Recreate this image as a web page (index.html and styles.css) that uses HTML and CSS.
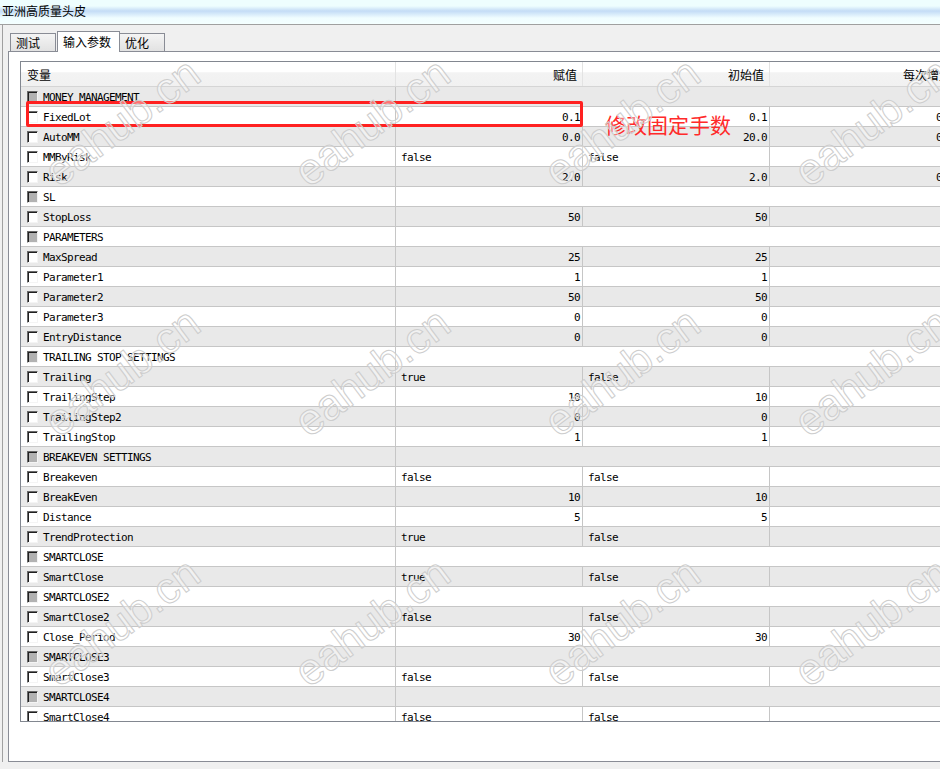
FILE: index.html
```html
<!DOCTYPE html>
<html lang="zh-CN">
<head>
    <meta charset="UTF-8">
    <meta name="viewport" content="width=device-width, initial-scale=1.0">
    <title>亚洲高质量头皮</title>
    <link rel="stylesheet" href="styles.css">
</head>
<body>

    <div class="titlebar">亚洲高质量头皮</div>

    <div class="window">
        <div class="tabs">
            <div class="tab">测试</div>
            <div class="tab active">输入参数</div>
            <div class="tab">优化</div>
        </div>

        <div class="panel">
            <!-- 参数列表 -->
            <div class="params" id="params">
                <div class="row head">
                    <div class="cell name">变量</div>
                    <div class="cell num">赋值</div>
                    <div class="cell num">初始值</div>
                    <div class="cell num">每次增量</div>
                </div>

                <div class="note-box"></div>
                <div class="note-text">修改固定手数</div>
            </div>
        </div>
    </div>

    <div class="watermarks" id="watermarks"></div>

    <script>
        // 参数: [名称, 赋值, 初始值, 每次增量]，只有名称的是分组
        const params = [
            ['MONEY MANAGEMENT'],
            ['FixedLot', '0.1', '0.1', '0.0'],
            ['AutoMM', '0.0', '20.0', '0.0'],
            ['MMByRisk', 'false', 'false', ''],
            ['Risk', '2.0', '2.0', '0.0'],
            ['SL'],
            ['StopLoss', '50', '50', ''],
            ['PARAMETERS'],
            ['MaxSpread', '25', '25', ''],
            ['Parameter1', '1', '1', ''],
            ['Parameter2', '50', '50', ''],
            ['Parameter3', '0', '0', ''],
            ['EntryDistance', '0', '0', ''],
            ['TRAILING STOP SETTINGS'],
            ['Trailing', 'true', 'false', ''],
            ['TrailingStep', '10', '10', ''],
            ['TrailingStep2', '0', '0', ''],
            ['TrailingStop', '1', '1', ''],
            ['BREAKEVEN SETTINGS'],
            ['Breakeven', 'false', 'false', ''],
            ['BreakEven', '10', '10', ''],
            ['Distance', '5', '5', ''],
            ['TrendProtection', 'true', 'false', ''],
            ['SMARTCLOSE'],
            ['SmartClose', 'true', 'false', ''],
            ['SMARTCLOSE2'],
            ['SmartClose2', 'false', 'false', ''],
            ['Close_Period', '30', '30', ''],
            ['SMARTCLOSE3'],
            ['SmartClose3', 'false', 'false', ''],
            ['SMARTCLOSE4'],
            ['SmartClose4', 'false', 'false', '']
        ];

        const list = document.getElementById('params');
        const note = list.querySelector('.note-box');

        function valueCell(text) {
            const cell = document.createElement('div');
            const isBool = text === 'true' || text === 'false';
            cell.className = 'cell ' + (isBool ? 'txt' : 'num');
            cell.textContent = text;
            return cell;
        }

        params.forEach(function (p, i) {
            const row = document.createElement('div');
            row.className = 'row' + (i % 2 === 0 ? ' alt' : '') + (p.length === 1 ? ' group' : '');

            const name = document.createElement('div');
            name.className = 'cell name';
            name.innerHTML = '<span class="check"></span><span></span>';
            name.lastChild.textContent = p[0];
            row.appendChild(name);

            if (p.length === 1) {
                const rest = document.createElement('div');
                rest.className = 'cell rest';
                row.appendChild(rest);
            } else {
                row.appendChild(valueCell(p[1]));
                row.appendChild(valueCell(p[2]));
                row.appendChild(valueCell(p[3]));
            }
            list.insertBefore(row, note);
        });

        // 水印
        const marks = document.getElementById('watermarks');
        for (let y = 122; y < 769 + 125; y += 250) {
            for (let x = 122; x < 940 + 125; x += 250) {
                const m = document.createElement('div');
                m.className = 'mark';
                m.textContent = 'eahub.cn';
                m.style.left = x + 'px';
                m.style.top = y + 'px';
                marks.appendChild(m);
            }
        }
    </script>

</body>
</html>
```

FILE: styles.css
```css
* {
    margin: 0;
    padding: 0;
    box-sizing: border-box;
}

html {
    overflow: hidden;
}

body {
    font-family: "Noto Sans CJK SC", sans-serif;
    font-size: 12px;
    color: #000;
    background-color: #f0f0f0;
    width: 940px;
    height: 769px;
    overflow: hidden;
    position: relative;
}

.titlebar {
    height: 25px;
    padding-left: 2px;
    line-height: 21px;
    border-bottom: 1px solid #a0a0a0;
    background: linear-gradient(#eefefe 0, #eefefe 6px, #c4dcf6 11px, #d6eafa 14px, #f0fdff 18px, #f4ffff 100%);
}

.window {
    margin-left: 2px;
    border-left: 1px solid #a0a0a0;
    padding-left: 5px;
}

/* 选项卡 */
.tabs {
    display: flex;
    align-items: flex-end;
    height: 26px;
    padding-left: 2px;
}

.tab {
    height: 18px;
    min-width: 46px;
    padding: 0 5px;
    line-height: 17px;
    border: 1px solid #898c95;
    border-bottom: none;
    background: linear-gradient(#f4f4f4, #e2e2e2);
}

.tab + .tab {
    margin-left: -1px;
}

.tab.active {
    height: 21px;
    margin: 0 0 -1px 1px;
    padding: 0 8px 0 5px;
    line-height: 19px;
    background: #fff;
    position: relative;
    z-index: 1;
}

.panel {
    height: 711px;
    padding: 9px 0 0 11px;
    background-color: #fff;
    border: 1px solid #898c95;
    border-right: none;
}

/* 参数表格 */
.params {
    position: relative;
    width: 960px;
    height: 661px;
    overflow: hidden;
    border: 1px solid #828790;
    border-right: none;
    font-family: "DejaVu Sans Mono", monospace;
    font-size: 11px;
    letter-spacing: -0.62px;
}

.row {
    display: grid;
    grid-template-columns: 375px 187px 187px 187px;
    height: 20px;
    border-bottom: 1px solid #c6c6c6;
    background-color: #fff;
}

.row.alt {
    background-color: #e9e9e9;
}

.cell {
    border-right: 1px solid #c6c6c6;
    padding-top: 2px;
    line-height: 17px;
    white-space: nowrap;
    overflow: hidden;
}

.cell.name {
    display: flex;
    align-items: center;
    padding-top: 0;
    padding-left: 6px;
}

.cell.name span:last-child {
    padding-top: 2px;
}

.cell.num {
    text-align: right;
    padding-right: 2px;
}

.cell.txt {
    padding-left: 5px;
}

.row.group .rest {
    grid-column: 2 / -1;
    border-right: none;
}

.check {
    width: 11px;
    height: 12px;
    margin-right: 5px;
    flex-shrink: 0;
    background-color: #fff;
    border: 1px solid;
    border-color: #6a6a6a #f4f4f4 #f4f4f4 #6a6a6a;
    box-shadow: inset 1px 1px 0 #202020;
}

.row.group .check {
    background-color: #b2b2b2;
}

.row.head {
    height: 25px;
    border-bottom: 1px solid #d5d5d5;
    background: linear-gradient(#fff 0, #fff 40%, #f3f3f3 45%, #f1f1f1 100%);
    font-family: "Noto Sans CJK SC", sans-serif;
    font-size: 12px;
    letter-spacing: 0;
}

.row.head .cell {
    padding-top: 0;
    line-height: 25px;
    border-right-color: #e3e3e3;
}

.row.head .cell.name {
    display: block;
    padding-left: 6px;
}

.row.head .cell.num {
    padding-right: 5px;
}

/* 红色标注 */
.note-box {
    position: absolute;
    left: 5px;
    top: 39px;
    width: 557px;
    height: 26px;
    border: 3px solid #ff2121;
    border-radius: 2px;
}

.note-text {
    position: absolute;
    left: 584px;
    top: 50px;
    font-family: "Noto Sans CJK SC", sans-serif;
    font-size: 21px;
    line-height: 24px;
    letter-spacing: 0;
    color: #ff2a2a;
}

/* 水印 */
.watermarks {
    position: absolute;
    left: 0;
    top: 0;
    width: 940px;
    height: 769px;
    overflow: hidden;
    pointer-events: none;
}

.mark {
    position: absolute;
    font-family: "Liberation Sans", sans-serif;
    font-size: 44px;
    line-height: 46px;
    white-space: nowrap;
    color: rgba(255, 255, 255, 0.4);
    -webkit-text-stroke: 1px #cdcdcd;
    transform: translate(-50%, -50%) rotate(-37deg);
}
```
